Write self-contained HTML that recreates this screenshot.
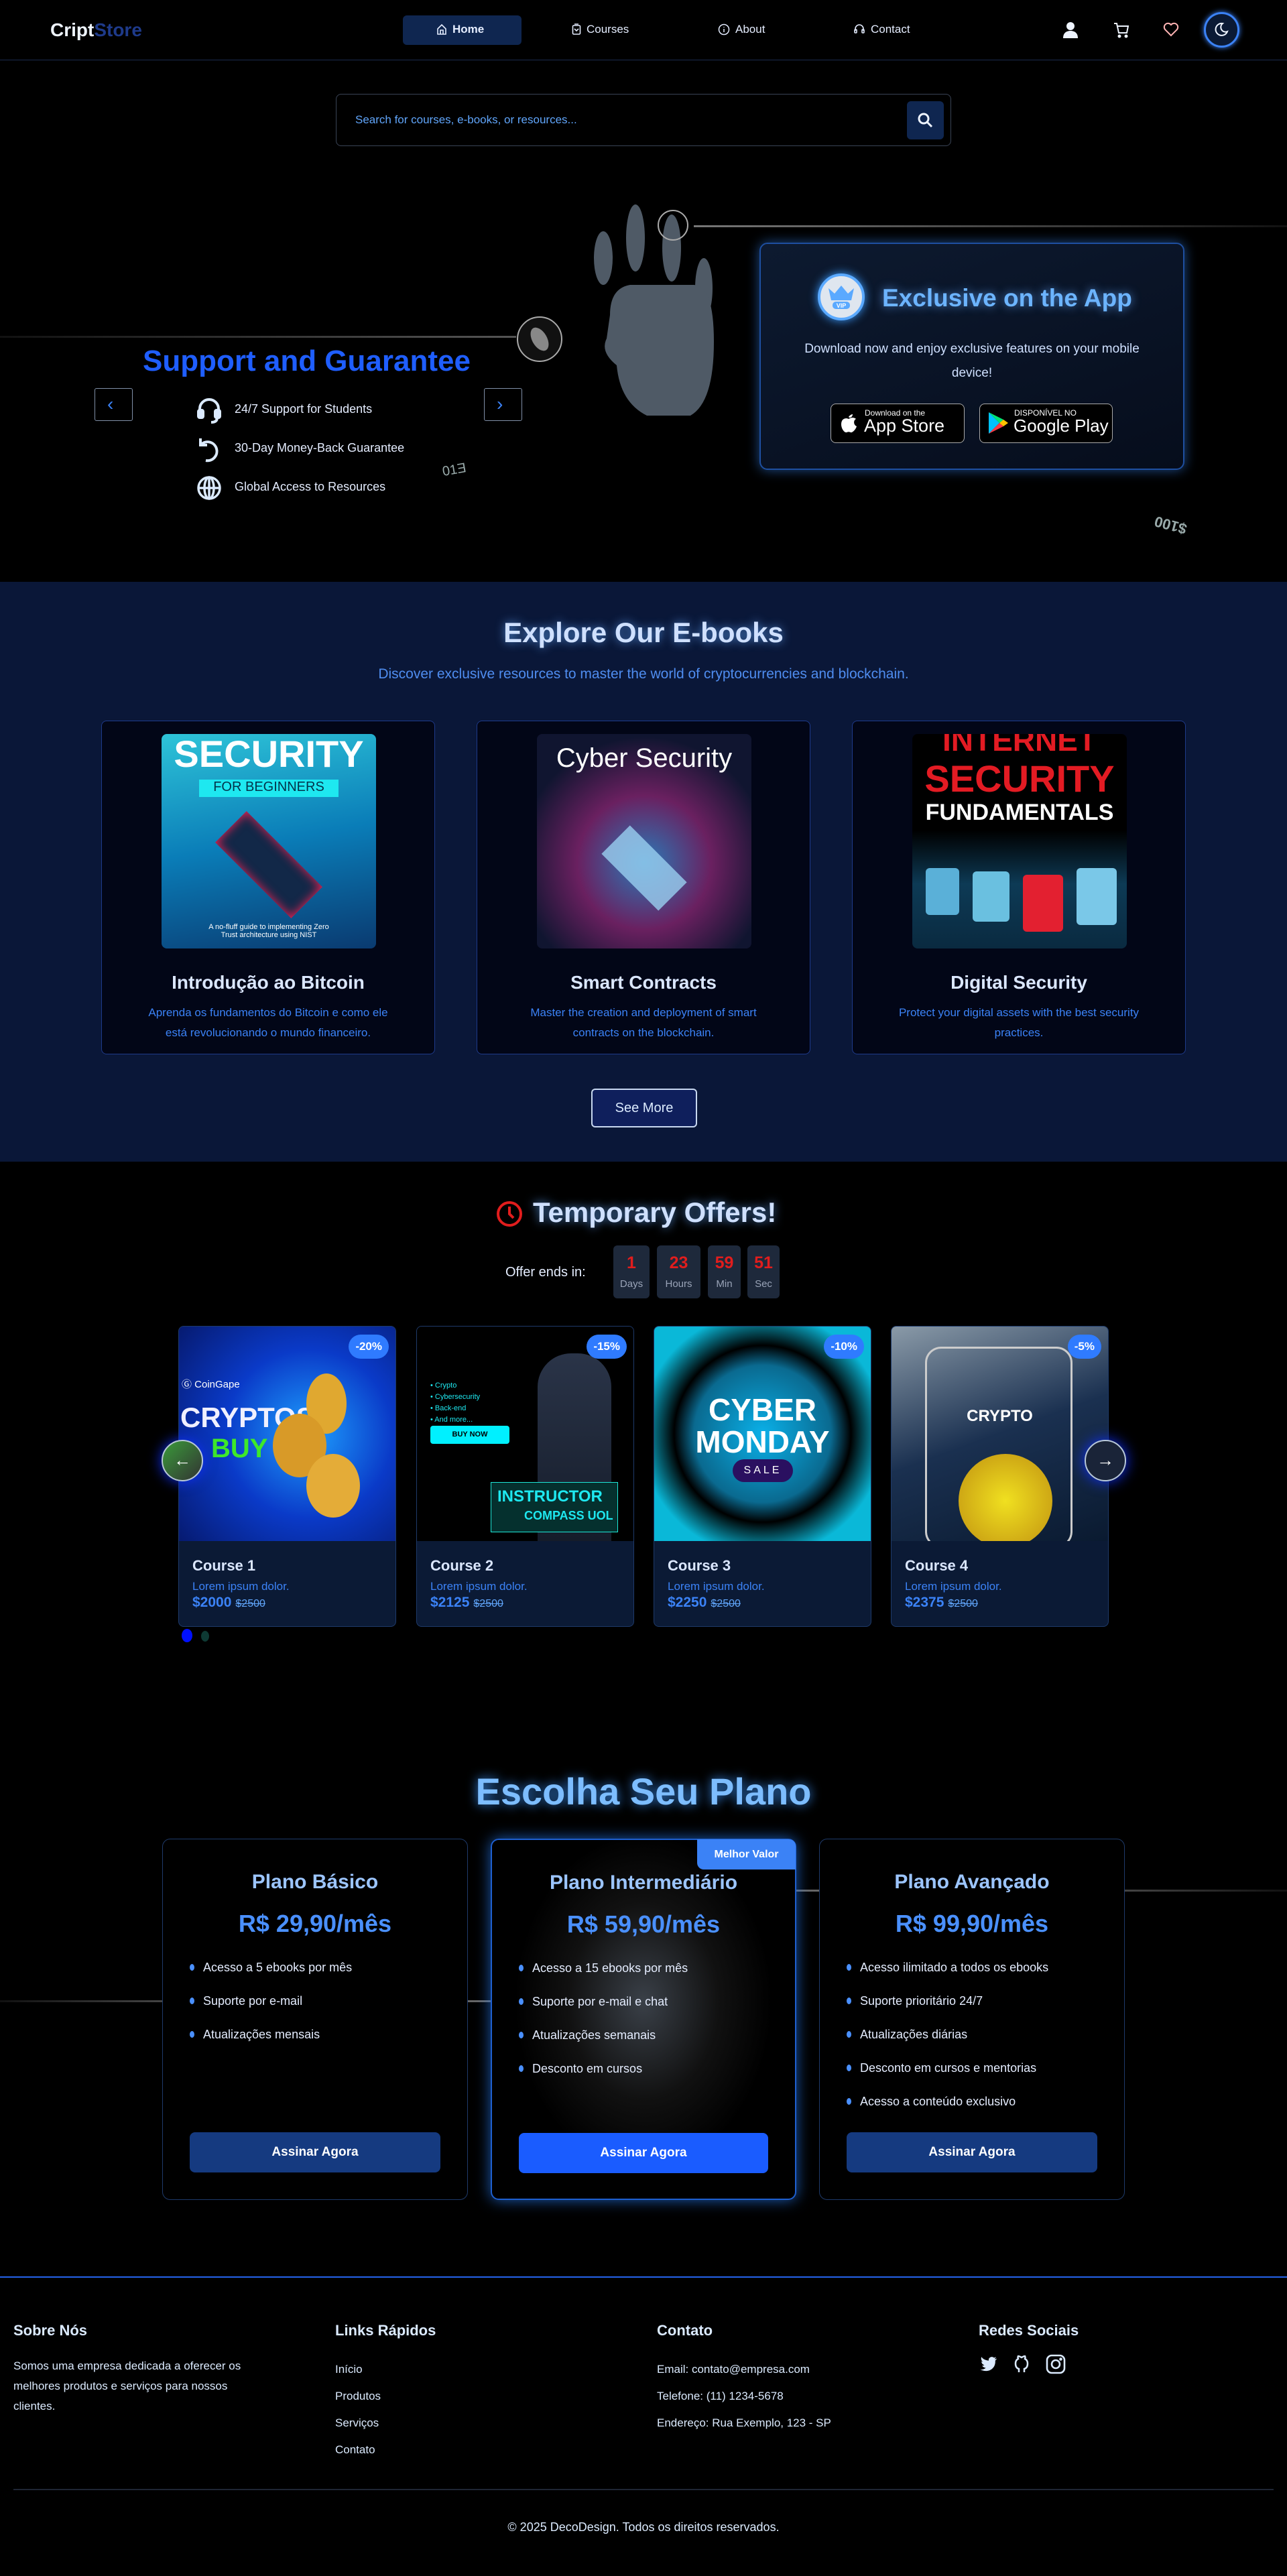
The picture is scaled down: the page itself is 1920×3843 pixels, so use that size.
<!DOCTYPE html>
<html><head><meta charset="utf-8">
<style>
*{box-sizing:border-box;margin:0;padding:0}
body{width:1920px;height:3843px;background:#000;font-family:"Liberation Sans",sans-serif;color:#dbeafe;position:relative;overflow:hidden}
.a{position:absolute}
.c{text-align:center}
.glow{text-shadow:0 0 14px rgba(96,165,250,.8)}
.navt{font-size:17px;color:#e5edff;display:flex;align-items:center;gap:8px}
.ecard{position:absolute;top:1075px;width:498px;height:498px;background:#020617;border:1px solid #1e3a8a;border-radius:8px}
.ecard .img{position:absolute;left:89px;top:19px;width:320px;height:320px;border-radius:8px;overflow:hidden}
.ecard h3{position:absolute;top:374px;width:100%;text-align:center;font-size:28px;color:#dbe7ff}
.ecard p{position:absolute;top:420px;left:55px;right:55px;text-align:center;font-size:17px;line-height:30px;color:#3b82f6}
.ccard{position:absolute;top:1978px;width:325px;height:449px;background:#0b1a35;border:1px solid #1e3a6a;border-radius:8px;overflow:hidden}
.ccard .img{height:320px;position:relative;overflow:hidden}
.ccard h4{position:absolute;top:344px;left:20px;font-size:22px;color:#dbe7ff}
.ccard .d{position:absolute;top:378px;left:20px;font-size:17px;color:#3b82f6}
.ccard .p{position:absolute;top:400px;left:20px;font-size:21px;color:#3b82f6;font-weight:bold}
.ccard .p s{font-size:16px;font-weight:normal;color:#60a5fa;margin-left:6px}
.badge{position:absolute;right:10px;top:12px;background:#2f7bff;color:#fff;font-weight:bold;font-size:17px;padding:8px 10px;border-radius:18px}
.tbox{position:absolute;top:1858px;height:79px;background:#1e293b;border-radius:6px;text-align:center}
.tbox b{display:block;color:#e11d1d;font-size:25px;margin-top:12px}
.tbox span{display:block;color:#9aa4b8;font-size:15px;margin-top:8px}
.pcard{position:absolute;top:2743px;width:456px;height:539px;border:1px solid #1e3a6a;border-radius:12px;background:rgba(0,0,0,.6)}
.pcard h3{position:absolute;top:47px;width:100%;text-align:center;font-size:30px;color:#9cc5ff}
.pcard .pr{position:absolute;top:105px;width:100%;text-align:center;font-size:36px;font-weight:bold;color:#4a90ff}
.pcard ul{position:absolute;top:181px;left:40px;list-style:none}
.pcard li{font-size:18px;height:50px;color:#e5edff;position:relative;padding-left:20px}
.pcard li:before{content:"";position:absolute;left:0;top:5px;width:7px;height:10px;border-radius:50%;background:#4a90ff}
.pcard .btn{position:absolute;left:40px;right:40px;top:437px;height:60px;border-radius:8px;background:#153a80;color:#fff;font-size:19px;font-weight:bold;display:flex;align-items:center;justify-content:center}
.fh{position:absolute;top:3464px;font-size:22px;font-weight:bold;color:#dbeafe}
.ft{position:absolute;font-size:17px;color:#dbeafe;line-height:30px}
</style></head><body>

<!-- NAV -->
<div class="a" style="left:75px;top:29px;font-size:28px;font-weight:bold;color:#eef4ff">Cript<span style="color:#1e3a8a">Store</span></div>
<div class="a" style="left:601px;top:23px;width:177px;height:44px;background:#0f2650;border-radius:6px"></div>
<div class="a navt" style="left:651px;top:34px"><svg width="16" height="18" viewBox="0 0 16 18" fill="none" stroke="#e5edff" stroke-width="1.6"><path d="M2 8 L8 2 L14 8 V16 H2 Z M6 16 V10 H10 V16"/></svg><b>Home</b></div>
<div class="a navt" style="left:853px;top:34px"><svg width="14" height="18" viewBox="0 0 14 18" fill="none" stroke="#e5edff" stroke-width="1.6"><rect x="1.5" y="3" width="11" height="13" rx="1.5"/><path d="M4 8 L7 11 L10 8 M4 1 H10"/></svg>Courses</div>
<div class="a navt" style="left:1071px;top:34px"><svg width="18" height="18" viewBox="0 0 18 18" fill="none" stroke="#e5edff" stroke-width="1.5"><circle cx="9" cy="9" r="7.5"/><path d="M9 8 V13 M9 5 V6"/></svg>About</div>
<div class="a navt" style="left:1273px;top:34px"><svg width="18" height="18" viewBox="0 0 18 18" fill="none" stroke="#e5edff" stroke-width="1.6"><path d="M3 11 V8 A6 6 0 0 1 15 8 V11"/><rect x="2" y="9" width="3" height="5" rx="1"/><rect x="13" y="9" width="3" height="5" rx="1"/></svg>Contact</div>
<svg class="a" style="left:1585px;top:32px" width="24" height="26" viewBox="0 0 24 26" fill="#eef4ff"><circle cx="12" cy="7" r="6"/><path d="M1 25 C1 17 6 14 12 14 C18 14 23 17 23 25 Z"/></svg>
<svg class="a" style="left:1661px;top:33px" width="24" height="24" viewBox="0 0 24 24" fill="none" stroke="#eef4ff" stroke-width="2"><path d="M1 2 H5 L8 16 H20 L22 6 H6"/><circle cx="9" cy="21" r="1.5" fill="#eef4ff"/><circle cx="19" cy="21" r="1.5" fill="#eef4ff"/></svg>
<svg class="a" style="left:1735px;top:33px" width="24" height="22" viewBox="0 0 24 22" fill="none" stroke="#ffb4b4" stroke-width="2"><path d="M12 20 L3 11 A5 5 0 0 1 12 4 A5 5 0 0 1 21 11 Z"/></svg>
<div class="a" style="left:1796px;top:18px;width:53px;height:53px;border-radius:50%;border:3px solid #3b82f6;background:#0b1a35;box-shadow:0 0 8px #3b82f6"></div>
<svg class="a" style="left:1810px;top:32px" width="24" height="24" viewBox="0 0 24 24" fill="none" stroke="#eef4ff" stroke-width="2"><path d="M14 3 A9 9 0 1 0 21 15 A7 7 0 0 1 14 3 Z"/></svg>
<div class="a" style="left:0;top:89px;width:1920px;height:1px;background:#1b2a4f"></div>

<!-- SEARCH -->
<div class="a" style="left:501px;top:140px;width:918px;height:78px;border:1px solid #3a4456;border-radius:8px"></div>
<div class="a" style="left:530px;top:169px;font-size:17px;color:#60a5fa">Search for courses, e-books, or resources...</div>
<div class="a" style="left:1353px;top:151px;width:55px;height:57px;background:#0f2650;border-radius:6px"></div>
<svg class="a" style="left:1368px;top:167px" width="26" height="26" viewBox="0 0 26 26" fill="none" stroke="#eef4ff" stroke-width="3"><circle cx="10" cy="10" r="7"/><path d="M15 15 L22 22"/></svg>

<!-- HERO -->
<div class="a" style="left:1035px;top:336px;width:885px;height:3px;background:linear-gradient(90deg,#777,#333 70%,#111)"></div>
<div class="a" style="left:0;top:501px;width:770px;height:3px;background:linear-gradient(90deg,#111,#555)"></div>
<svg class="a" style="left:870px;top:300px" width="240" height="330" viewBox="0 0 240 330">
<g fill="#6a7888" opacity=".75">
<ellipse cx="30" cy="85" rx="14" ry="40"/><ellipse cx="78" cy="55" rx="14" ry="50" /><ellipse cx="132" cy="70" rx="14" ry="50"/><ellipse cx="180" cy="130" rx="13" ry="45"/>
<path d="M40 170 Q40 130 70 125 L165 125 Q195 125 195 210 Q195 300 160 320 L95 320 Q55 300 50 245 Q25 225 35 205 Z"/>
</g>
<circle cx="134" cy="36" r="22" fill="none" stroke="#aaa" stroke-width="2"/>
</svg>
<svg class="a" style="left:765px;top:470px" width="80" height="80"><circle cx="40" cy="36" r="33" fill="#111" stroke="#aaa" stroke-width="2"/><ellipse cx="40" cy="36" rx="11" ry="19" fill="#888" transform="rotate(-30 40 36)"/></svg>

<div class="a" style="left:213px;top:514px;font-size:44px;font-weight:bold;color:#1f5eff">Support and Guarantee</div>
<div class="a" style="left:141px;top:579px;width:57px;height:49px;border:1px solid #8090a8;border-radius:3px"></div>
<div class="a" style="left:160px;top:587px;font-size:28px;color:#3b82f6">‹</div>
<div class="a" style="left:722px;top:579px;width:57px;height:49px;border:1px solid #8090a8;border-radius:3px"></div>
<div class="a" style="left:741px;top:587px;font-size:28px;color:#3b82f6">›</div>
<svg class="a" style="left:293px;top:592px" width="38" height="42" viewBox="0 0 38 42" fill="none" stroke="#dbeafe" stroke-width="4"><path d="M5 24 V18 A14 14 0 0 1 33 18 V24"/><rect x="3" y="20" width="7" height="11" rx="2" fill="#dbeafe"/><rect x="28" y="20" width="7" height="11" rx="2" fill="#dbeafe"/><path d="M31 31 Q31 38 22 38"/></svg>
<div class="a" style="left:350px;top:600px;font-size:18px;color:#e5edff">24/7 Support for Students</div>
<svg class="a" style="left:293px;top:650px" width="38" height="42" viewBox="0 0 38 42" fill="none" stroke="#dbeafe" stroke-width="4"><path d="M6 4 V14 H16"/><path d="M7 13 A14 14 0 1 1 14 37"/></svg>
<div class="a" style="left:350px;top:658px;font-size:18px;color:#e5edff">30-Day Money-Back Guarantee</div>
<svg class="a" style="left:293px;top:708px" width="38" height="40" viewBox="0 0 38 40" fill="none" stroke="#dbeafe" stroke-width="3.5"><circle cx="19" cy="20" r="16"/><ellipse cx="19" cy="20" rx="7" ry="16"/><path d="M3 20 H35 M19 4 V36"/></svg>
<div class="a" style="left:350px;top:716px;font-size:18px;color:#e5edff">Global Access to Resources</div>
<div class="a" style="left:660px;top:690px;font-size:20px;color:#9aa;transform:rotate(-10deg)">01Ǝ</div>
<div class="a" style="left:1722px;top:770px;font-size:22px;color:#9aa;font-weight:bold;transform:rotate(195deg)">$100</div>

<div class="a" style="left:1133px;top:362px;width:634px;height:339px;border:2px solid #1e4fa0;border-radius:12px;background:linear-gradient(160deg,#0d1a30,#060d1c);box-shadow:0 0 18px rgba(56,140,255,.55)"></div>
<div class="a" style="left:1220px;top:408px;width:70px;height:70px;border-radius:50%;background:#dfe6ef;border:4px solid #5aa9ff;box-shadow:0 0 14px #3b9cff"></div>
<svg class="a" style="left:1232px;top:420px" width="46" height="46" viewBox="0 0 46 46"><path d="M4 10 L13 18 L23 6 L33 18 L42 10 L38 28 H8 Z" fill="#5aa9ff"/><rect x="10" y="30" width="26" height="11" rx="5" fill="#5aa9ff"/><text x="23" y="39" font-size="9" font-weight="bold" fill="#fff" text-anchor="middle" font-family="Liberation Sans">VIP</text></svg>
<div class="a glow" style="left:1316px;top:424px;font-size:37px;font-weight:bold;color:#6cb4ff">Exclusive on the App</div>
<div class="a c" style="left:1180px;top:503px;width:540px;font-size:19px;line-height:36px;color:#cfe0ff">Download now and enjoy exclusive features on your mobile device!</div>
<div class="a" style="left:1239px;top:602px;width:200px;height:59px;background:#000;border:1px solid #aaa;border-radius:8px"></div>
<svg class="a" style="left:1252px;top:613px" width="28" height="34" viewBox="0 0 28 34" fill="#fff"><path d="M14 9 C16 6 19 5 20 5 C20 8 18 10 15 10 Z"/><path d="M14 12 C10 10 3 11 3 20 C3 27 8 33 11 32 C13 31 15 31 17 32 C20 33 25 27 26 23 C21 21 21 14 25 12 C22 9 17 10 14 12 Z"/></svg>
<div class="a" style="left:1290px;top:609px;font-size:12px;color:#fff">Download on the</div>
<div class="a" style="left:1289px;top:620px;font-size:27px;color:#fff">App Store</div>
<div class="a" style="left:1461px;top:602px;width:199px;height:59px;background:#000;border:1px solid #aaa;border-radius:8px"></div>
<svg class="a" style="left:1473px;top:613px" width="32" height="36" viewBox="0 0 32 36"><path d="M2 2 L18 18 L2 34 Z" fill="#00c3ff"/><path d="M2 2 L24 13 L18 18 Z" fill="#00e676"/><path d="M2 34 L24 23 L18 18 Z" fill="#ff3a44"/><path d="M24 13 L31 18 L24 23 L18 18 Z" fill="#ffc400"/></svg>
<div class="a" style="left:1513px;top:609px;font-size:12px;color:#fff">DISPONÍVEL NO</div>
<div class="a" style="left:1512px;top:620px;font-size:26px;color:#fff">Google Play</div>

<!-- EBOOKS -->
<div class="a" style="left:0;top:868px;width:1920px;height:865px;background:#0a1738"></div>
<div class="a c glow" style="left:0;top:920px;width:1920px;font-size:42px;font-weight:bold;color:#cfe0ff">Explore Our E-books</div>
<div class="a c" style="left:0;top:994px;width:1920px;font-size:21px;color:#4f8df0">Discover exclusive resources to master the world of cryptocurrencies and blockchain.</div>

<div class="ecard" style="left:151px"><div class="img" style="background:linear-gradient(170deg,#2ec4d8,#0a7db8 50%,#0a3a70)">
<div style="position:absolute;top:0;width:100%;text-align:center;font-size:56px;font-weight:bold;color:#fff;line-height:60px">SECURITY</div>
<div style="position:absolute;top:68px;left:56px;width:208px;height:26px;background:#1ee8f0;color:#03334a;font-size:20px;text-align:center">FOR BEGINNERS</div>
<div style="position:absolute;top:140px;left:80px;width:160px;height:110px;background:#122848;transform:rotate(45deg) scaleY(.6);box-shadow:0 0 20px #ff2255 inset"></div>
<div style="position:absolute;bottom:14px;width:100%;text-align:center;font-size:11px;color:#fff">A no-fluff guide to implementing Zero<br>Trust architecture using NIST</div></div>
<h3>Introdução ao Bitcoin</h3><p>Aprenda os fundamentos do Bitcoin e como ele está revolucionando o mundo financeiro.</p></div>

<div class="ecard" style="left:711px"><div class="img" style="background:radial-gradient(circle at 50% 60%,#2a7ab8,#6a2060 40%,#101530 75%)">
<div style="position:absolute;top:14px;width:100%;text-align:center;font-size:40px;color:#fff">Cyber Security</div>
<div style="position:absolute;top:150px;left:100px;width:120px;height:100px;background:#9ad0f0;transform:rotate(45deg) scaleY(.6);opacity:.8"></div></div>
<h3>Smart Contracts</h3><p>Master the creation and deployment of smart contracts on the blockchain.</p></div>

<div class="ecard" style="left:1271px"><div class="img" style="background:linear-gradient(180deg,#000 0 45%,#0d3a55 70%,#0a2a40)">
<div style="position:absolute;top:-18px;width:100%;text-align:center;font-size:46px;font-weight:bold;color:#e31b23">INTERNET</div>
<div style="position:absolute;top:34px;width:100%;text-align:center;font-size:56px;font-weight:bold;color:#e31b23">SECURITY</div>
<div style="position:absolute;top:98px;width:100%;text-align:center;font-size:34px;font-weight:bold;color:#fff">FUNDAMENTALS</div>
<div style="position:absolute;top:200px;left:20px;width:50px;height:70px;background:#5ab0d8;border-radius:6px"></div>
<div style="position:absolute;top:205px;left:90px;width:55px;height:75px;background:#6ac0e0;border-radius:6px"></div>
<div style="position:absolute;top:210px;left:165px;width:60px;height:85px;background:#e32030;border-radius:6px"></div>
<div style="position:absolute;top:200px;left:245px;width:60px;height:85px;background:#7ac8e8;border-radius:6px"></div></div>
<h3>Digital Security</h3><p>Protect your digital assets with the best security practices.</p></div>

<div class="a" style="left:882px;top:1624px;width:158px;height:58px;border:2px solid #c8d8f0;border-radius:6px;background:#0f1f5c;color:#dbeafe;font-size:20px;display:flex;align-items:center;justify-content:center">See More</div>

<!-- OFFERS -->
<svg class="a" style="left:740px;top:1787px" width="40" height="46" viewBox="0 0 40 46" fill="none" stroke="#e11d1d" stroke-width="4"><circle cx="20" cy="24" r="17"/><path d="M20 13 V24 L26 30"/></svg>
<div class="a glow" style="left:795px;top:1785px;font-size:42px;font-weight:bold;color:#cfe0ff">Temporary Offers!</div>
<div class="a" style="left:754px;top:1887px;font-size:20px;color:#e5edff">Offer ends in:</div>
<div class="tbox" style="left:915px;width:54px"><b>1</b><span>Days</span></div>
<div class="tbox" style="left:980px;width:65px"><b>23</b><span>Hours</span></div>
<div class="tbox" style="left:1056px;width:49px"><b>59</b><span>Min</span></div>
<div class="tbox" style="left:1115px;width:48px"><b>51</b><span>Sec</span></div>

<div class="ccard" style="left:266px"><div class="img" style="background:radial-gradient(circle at 60% 50%,#1ea0ff,#0a3ac8 50%,#061a70)">
<div style="position:absolute;left:4px;top:75px;font-size:15px;color:#fff">Ⓖ CoinGape</div>
<div style="position:absolute;left:2px;top:112px;font-size:42px;font-weight:bold;color:#f0f0ff">CRYPTOS</div>
<div style="position:absolute;left:48px;top:160px;font-size:40px;font-weight:bold;color:#3ee82a">BUY</div>
<div style="position:absolute;left:190px;top:70px;width:60px;height:90px;border-radius:50%;background:#e0a830"></div>
<div style="position:absolute;left:140px;top:130px;width:80px;height:95px;border-radius:50%;background:#d89a28"></div>
<div style="position:absolute;left:190px;top:190px;width:80px;height:95px;border-radius:50%;background:#e4ac38"></div></div>
<span class="badge">-20%</span><h4>Course 1</h4><div class="d">Lorem ipsum dolor.</div><div class="p">$2000<s>$2500</s></div></div>

<div class="ccard" style="left:621px"><div class="img" style="background:#000">
<div style="position:absolute;left:20px;top:80px;font-size:11px;color:#1ee8f0;line-height:17px">• Crypto<br>• Cybersecurity<br>• Back-end<br>• And more...</div>
<div style="position:absolute;left:20px;top:148px;width:118px;height:27px;background:#00f0ff;border-radius:4px;font-size:11px;color:#000;text-align:center;line-height:27px;font-weight:bold">BUY NOW</div>
<div style="position:absolute;left:180px;top:40px;width:110px;height:280px;background:linear-gradient(#2a3448,#151c2a);border-radius:50px 50px 0 0"></div>
<div style="position:absolute;left:110px;top:232px;width:190px;height:75px;background:#05302e;border:1px solid #1ee8d8"></div>
<div style="position:absolute;left:120px;top:240px;font-size:24px;font-weight:bold;color:#1ee8f0">INSTRUCTOR</div>
<div style="position:absolute;left:160px;top:272px;font-size:18px;font-weight:bold;color:#1ee8f0">COMPASS UOL</div></div>
<span class="badge">-15%</span><h4>Course 2</h4><div class="d">Lorem ipsum dolor.</div><div class="p">$2125<s>$2500</s></div></div>

<div class="ccard" style="left:975px"><div class="img" style="background:radial-gradient(circle,#0ab0e8 0,#0a6a90 45%,#000 58%,#0ab8d8 80%)">
<div style="position:absolute;top:100px;width:100%;text-align:center;font-size:46px;font-weight:bold;color:#fff;line-height:48px">CYBER<br>MONDAY</div>
<div style="position:absolute;top:198px;left:117px;width:90px;height:34px;background:#2a1060;border-radius:17px;color:#fff;text-align:center;line-height:34px;letter-spacing:4px">SALE</div></div>
<span class="badge">-10%</span><h4>Course 3</h4><div class="d">Lorem ipsum dolor.</div><div class="p">$2250<s>$2500</s></div></div>

<div class="ccard" style="left:1329px"><div class="img" style="background:linear-gradient(160deg,#8a9aa8,#1a3050 50%,#0a1a30)">
<div style="position:absolute;left:50px;top:30px;width:220px;height:300px;border:3px solid #ccc;border-radius:24px"></div>
<div style="position:absolute;top:120px;width:100%;text-align:center;font-size:24px;font-weight:bold;color:#fff">CRYPTO</div>
<div style="position:absolute;left:100px;top:190px;width:140px;height:140px;border-radius:50%;background:radial-gradient(#f0e020,#c09010)"></div></div>
<span class="badge">-5%</span><h4>Course 4</h4><div class="d">Lorem ipsum dolor.</div><div class="p">$2375<s>$2500</s></div></div>

<div class="a" style="left:241px;top:2148px;width:62px;height:62px;border-radius:50%;background:linear-gradient(135deg,#3a9a3a,#333);border:2px solid #b8c8d8;box-shadow:0 0 20px #1030ff;color:#fff;font-size:26px;text-align:center;line-height:56px">←</div>
<div class="a" style="left:1618px;top:2148px;width:62px;height:62px;border-radius:50%;background:#1a2438;border:2px solid #b8c8d8;box-shadow:0 0 22px #1030ff;color:#fff;font-size:26px;text-align:center;line-height:56px">→</div>
<div class="a" style="left:271px;top:2430px;width:16px;height:20px;border-radius:50%;background:#0010ff"></div>
<div class="a" style="left:300px;top:2433px;width:12px;height:16px;border-radius:50%;background:#0e3a34"></div>

<!-- PRICING -->
<div class="a" style="left:1188px;top:2819px;width:34px;height:3px;background:#666"></div>
<div class="a" style="left:1678px;top:2819px;width:242px;height:3px;background:linear-gradient(90deg,#444,#111)"></div>
<div class="a" style="left:0;top:2984px;width:242px;height:3px;background:linear-gradient(90deg,#111,#444)"></div>
<div class="a" style="left:698px;top:2984px;width:34px;height:3px;background:#666"></div>
<div class="a c" style="left:0;top:2640px;width:1920px;font-size:56px;font-weight:bold;color:#7dbdff;text-shadow:0 0 16px rgba(60,150,255,.9)">Escolha Seu Plano</div>

<div class="pcard" style="left:242px"><h3>Plano Básico</h3><div class="pr">R$ 29,90/mês</div>
<ul><li>Acesso a 5 ebooks por mês</li><li>Suporte por e-mail</li><li>Atualizações mensais</li></ul><div class="btn">Assinar Agora</div></div>
<div class="pcard" style="left:732px;border:2px solid #1e5fd0;box-shadow:0 0 22px rgba(40,130,255,.7);background:radial-gradient(ellipse at 50% 45%,#3a4048 0,#111 35%,#000 60%)">
<div style="position:absolute;right:-1px;top:-1px;width:147px;height:45px;background:#3b82f6;border-radius:0 10px 0 10px;color:#fff;font-size:16px;font-weight:bold;text-align:center;line-height:45px">Melhor Valor</div>
<h3>Plano Intermediário</h3><div class="pr">R$ 59,90/mês</div>
<ul><li>Acesso a 15 ebooks por mês</li><li>Suporte por e-mail e chat</li><li>Atualizações semanais</li><li>Desconto em cursos</li></ul><div class="btn" style="background:#1a5cff">Assinar Agora</div></div>
<div class="pcard" style="left:1222px"><h3>Plano Avançado</h3><div class="pr">R$ 99,90/mês</div>
<ul><li>Acesso ilimitado a todos os ebooks</li><li>Suporte prioritário 24/7</li><li>Atualizações diárias</li><li>Desconto em cursos e mentorias</li><li>Acesso a conteúdo exclusivo</li></ul><div class="btn">Assinar Agora</div></div>

<!-- FOOTER -->
<div class="a" style="left:0;top:3396px;width:1920px;height:2px;background:#2563eb"></div>
<div class="fh" style="left:20px">Sobre Nós</div>
<div class="fh" style="left:500px">Links Rápidos</div>
<div class="fh" style="left:980px">Contato</div>
<div class="fh" style="left:1460px">Redes Sociais</div>
<div class="ft" style="left:20px;top:3515px;width:380px">Somos uma empresa dedicada a oferecer os melhores produtos e serviços para nossos clientes.</div>
<div class="ft" style="left:500px;top:3515px;line-height:40px">Início<br>Produtos<br>Serviços<br>Contato</div>
<div class="ft" style="left:980px;top:3515px;line-height:40px">Email: contato@empresa.com<br>Telefone: (11) 1234-5678<br>Endereço: Rua Exemplo, 123 - SP</div>
<svg class="a" style="left:1462px;top:3515px" width="26" height="24" viewBox="0 0 24 20" fill="#dbeafe"><path d="M23 2 C22 3 21 3 20 3 C21 2 22 1 22 0 C21 1 20 1 19 1 C17 -1 13 0 12 3 C12 4 12 5 12 5 C8 5 4 3 2 0 C1 3 2 5 4 7 C3 7 2 6 2 6 C2 9 4 11 6 11 C5 12 4 12 3 12 C4 14 6 15 8 15 C6 17 3 18 0 17 C10 23 22 17 21 5 C22 4 23 3 23 2Z"/></svg>
<svg class="a" style="left:1512px;top:3513px" width="24" height="28" viewBox="0 0 24 28" fill="none" stroke="#dbeafe" stroke-width="2.5"><path d="M8 26 V21 C4 20 3 17 3 13 C3 9 5 7 7 6 C6 4 7 2 7 2 C9 2 10 3 12 4 C14 3 15 2 17 2 C17 2 18 4 17 6 C19 7 21 9 21 13 C21 17 20 20 16 21 V26"/></svg>
<svg class="a" style="left:1560px;top:3512px" width="30" height="30" viewBox="0 0 30 30" fill="none" stroke="#dbeafe" stroke-width="2.6"><rect x="2" y="2" width="26" height="26" rx="7"/><circle cx="15" cy="15" r="6"/><circle cx="22.5" cy="7.5" r="1" fill="#dbeafe"/></svg>
<div class="a" style="left:20px;top:3713px;width:1880px;height:2px;background:#1e2533"></div>
<div class="a c" style="left:0;top:3760px;width:1920px;font-size:18px;color:#dbeafe">© 2025 DecoDesign. Todos os direitos reservados.</div>
</body></html>
